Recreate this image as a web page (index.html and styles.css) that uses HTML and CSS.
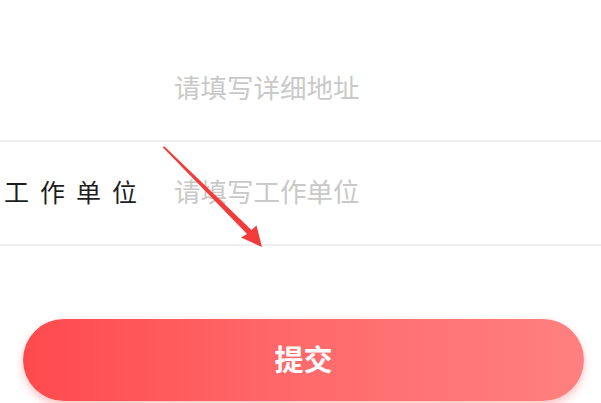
FILE: index.html
```html
<!DOCTYPE html>
<html lang="zh-CN">
<head>
<meta charset="utf-8">
<link rel="stylesheet" href="styles.css">
</head>
<body>
<div class="page">
  <div class="form">
    <div class="row">
      <div class="label"></div>
      <div class="input">请填写详细地址</div>
    </div>
    <div class="row">
      <div class="label">工作单位</div>
      <div class="input">请填写工作单位</div>
    </div>
  </div>
  <div class="actions">
    <button class="submit">提交</button>
  </div>
  <svg class="arrow" width="601" height="403" viewBox="0 0 601 403">
    <polygon points="162.5,147 164.5,146.5 251.5,230 256.5,225.5 262,247 241,237.5 247,234" fill="#f23b3b"/>
  </svg>
</div>
</body>
</html>
```
FILE: styles.css
```css
html, body {
  margin: 0;
  padding: 0;
  background: #ffffff;
}
body {
  font-family: "Noto Sans CJK SC", "Noto Sans", sans-serif;
  width: 601px;
  height: 403px;
  overflow: hidden;
}
.page {
  position: relative;
  width: 601px;
  height: 403px;
}
.form {
  padding-top: 38px;
}
.row {
  display: flex;
  align-items: center;
  height: 102px;
  border-bottom: 2px solid #efefef;
}
.label {
  width: 170px;
  padding-left: 4px;
  padding-bottom: 4px;
  font-size: 25px;
  letter-spacing: 11px;
  color: #1e1e1e;
  white-space: nowrap;
}
.input {
  font-size: 26.5px;
  padding-bottom: 6px;
  color: #c9c9c9;
  white-space: nowrap;
}
.actions {
  padding: 73px 17px 0 23px;
}
.submit {
  display: block;
  width: 561px;
  height: 82px;
  border: none;
  border-radius: 41px;
  background: linear-gradient(90deg, #ff4a4d 0%, #ff6a6b 50%, #ff8080 100%);
  box-shadow: 0 4px 8px rgba(255, 80, 80, 0.35);
  color: #ffffff;
  font-family: "Noto Sans CJK SC", "Noto Sans", sans-serif;
  font-size: 29px;
  font-weight: 700;
  line-height: 1;
  padding: 0;
  padding-bottom: 4px;
}
.arrow {
  position: absolute;
  left: 0;
  top: 0;
  pointer-events: none;
}
```
